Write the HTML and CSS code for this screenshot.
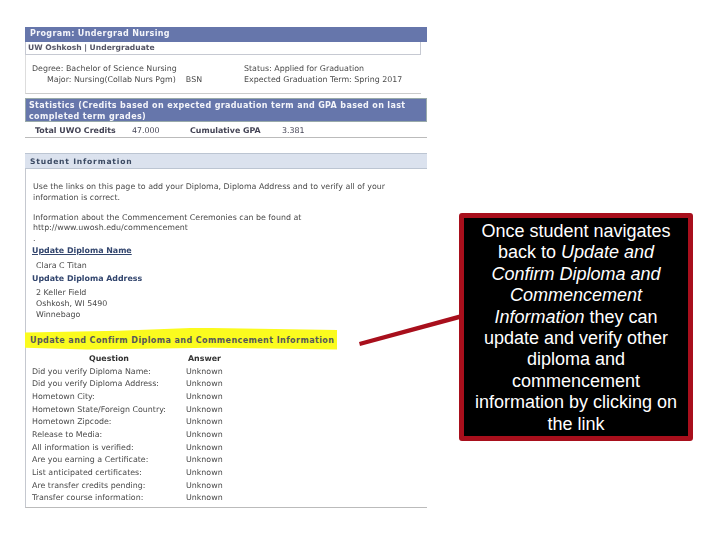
FILE: index.html
```html
<!DOCTYPE html>
<html lang="en">
<head>
<meta charset="utf-8">
<title>Update and Confirm Diploma</title>
<link rel="stylesheet" href="styles.css">
</head>
<body>
<main class="sheet">
  <section class="program">
    <h2 class="bar program-bar">Program: Undergrad Nursing</h2>
    <div class="campus">UW Oshkosh | Undergraduate</div>
    <div class="degree">
      <div class="degree-col">
        <div>Degree: Bachelor of Science Nursing</div>
        <div class="major"><span>Major: Nursing(Collab Nurs Pgm)</span><span class="bsn">BSN</span></div>
      </div>
      <div class="degree-col">
        <div>Status: Applied for Graduation</div>
        <div>Expected Graduation Term: Spring 2017</div>
      </div>
    </div>
  </section>
  <section class="stats">
    <h2 class="bar stats-bar">Statistics (Credits based on expected graduation term and GPA based on last completed term grades)</h2>
    <div class="stats-row">
      <b class="s1">Total UWO Credits</b><span class="s2">47.000</span><b class="s3">Cumulative GPA</b><span>3.381</span>
    </div>
  </section>
  <section class="student">
    <h2 class="student-head">Student Information</h2>
    <div class="student-body">
      <p class="intro">Use the links on this page to add your Diploma, Diploma Address and to verify all of your information is correct.</p>
      <p class="intro gap">Information about the Commencement Ceremonies can be found at<br>http://www.uwosh.edu/commencement<br>.</p>
      <a class="link under">Update Diploma Name</a>
      <div class="person">Clara C Titan</div>
      <a class="link">Update Diploma Address</a>
      <div class="address">2 Keller Field<br>Oshkosh, WI 5490<br>Winnebago</div>
      <div class="marked"><span>Update and Confirm Diploma and Commencement Information</span></div>
      <table class="qa">
        <thead><tr><th class="q">Question</th><th class="a">Answer</th></tr></thead>
        <tbody>
          <tr><td>Did you verify Diploma Name:</td><td>Unknown</td></tr>
          <tr><td>Did you verify Diploma Address:</td><td>Unknown</td></tr>
          <tr><td>Hometown City:</td><td>Unknown</td></tr>
          <tr><td>Hometown State/Foreign Country:</td><td>Unknown</td></tr>
          <tr><td>Hometown Zipcode:</td><td>Unknown</td></tr>
          <tr><td>Release to Media:</td><td>Unknown</td></tr>
          <tr><td>All information is verified:</td><td>Unknown</td></tr>
          <tr><td>Are you earning a Certificate:</td><td>Unknown</td></tr>
          <tr><td>List anticipated certificates:</td><td>Unknown</td></tr>
          <tr><td>Are transfer credits pending:</td><td>Unknown</td></tr>
          <tr><td>Transfer course information:</td><td>Unknown</td></tr>
        </tbody>
      </table>
    </div>
  </section>
</main>
<svg class="pointer" width="110" height="40" viewBox="0 0 110 40" aria-hidden="true"><path d="M0 30 L104 1.5 L105 6 L1 34 Z" fill="#a80f1c"/></svg>
<aside class="callout">Once student navigates back to <i>Update and Confirm Diploma and Commencement Information</i> they can update and verify other diploma and commencement information by clicking on the link</aside>
</body>
</html>
```
FILE: styles.css
```css
html, body { margin: 0; padding: 0; background: #fff; }
body { width: 720px; height: 540px; overflow: hidden; position: relative; }
.sheet {
  width: 402px; margin-left: 25px; padding-top: 27px;
  font: 7.9px/10.8px "DejaVu Sans", sans-serif; color: #4a4a4a;
  filter: blur(0.45px);
}
h2 { margin: 0; font-size: inherit; }
.bar { color: #f4f5fa; background: #6676ab; font-weight: bold; letter-spacing: .35px; }
.program-bar { height: 15px; line-height: 14px; padding-left: 5px; font-size: 8px; }
.campus { height: 12px; line-height: 12px; margin: 0 6px 0 0; padding-left: 2px; border: 1px solid #c6c9d2; border-top: 0; font-weight: bold; font-size: 7.6px; color: #556; }
.degree { display: flex; height: 39px; margin-right: 6px; padding: 9px 0 0 6px; box-sizing: border-box; border-bottom: 1px solid #ccc; border-left: 1px solid #ddd; }
.degree-col:first-child { width: 212px; }
.major { display: flex; padding-left: 15px; }
.bsn { margin-left: 10px; }
.stats { margin-top: 4px; }
.stats-bar { height: 24px; line-height: 11px; padding: 1px 2px 0 3px; box-sizing: border-box; font-size: 8px; letter-spacing: .36px; font-weight: 600; border: 1px solid #9aa; }
.stats-row { height: 15px; line-height: 17px; padding-left: 10px; display: flex; border-bottom: 1px solid #bbb; color: #445; }
.s1 { width: 97px; }
.s2 { width: 58px; }
.s3 { width: 92px; }
.student { margin-top: 15px; border-left: 1px solid #c5c8cf; border-bottom: 1px solid #bbb; }
.student-head { height: 16px; line-height: 15px; margin-left: -1px; padding-left: 5px; background: #dbe2ee; border-top: 1px solid #bcc5d2; border-bottom: 1px solid #bcc5d2; box-sizing: border-box; color: #3b4a63; letter-spacing: .8px; font-size: 7.6px; }
.student-body { padding: 13px 0 2px 7px; }
.intro { margin: 0; width: 372px; }
.intro.gap { margin-top: 9px; }
.link { display: block; margin: 1px 0 0 -1px; color: #33466e; font-weight: bold; }
.under { text-decoration: underline; }
.person { padding: 4px 0 1px 3px; }
.address { padding: 4px 0 0 3px; }
.marked { margin: 7px 0 0 -8px; }
.marked span {
  display: inline-block; padding: 8px 3px 3px 5px;
  background: #fbfb1e; color: #54585a; font-weight: bold; font-size: 8px; letter-spacing: .42px;
  clip-path: polygon(0 22%, 30% 14%, 55% 0, 100% 10%, 100% 100%, 60% 92%, 20% 100%, 0 92%);
}
.qa { border-collapse: collapse; margin: 3px 0 0 -1px; }
.qa th, .qa td { padding: 0; height: 12.7px; line-height: 12px; text-align: left; }
.qa td:first-child, .qa th:first-child { width: 154px; }
.qa th { color: #333; }
.qa .q { text-align: center; }
.qa .a { padding-left: 2px; }
.pointer { position: absolute; left: 359px; top: 312px; }
.callout {
  position: absolute; left: 459px; top: 213px; width: 234px; height: 228px;
  box-sizing: border-box; padding: 3px 7px 0;
  background: #000; border: 5px solid #a80f1c; border-radius: 3px;
  color: #fff; text-align: center;
  font: 18px/21.4px "Liberation Sans", Arial, sans-serif;
}
```
